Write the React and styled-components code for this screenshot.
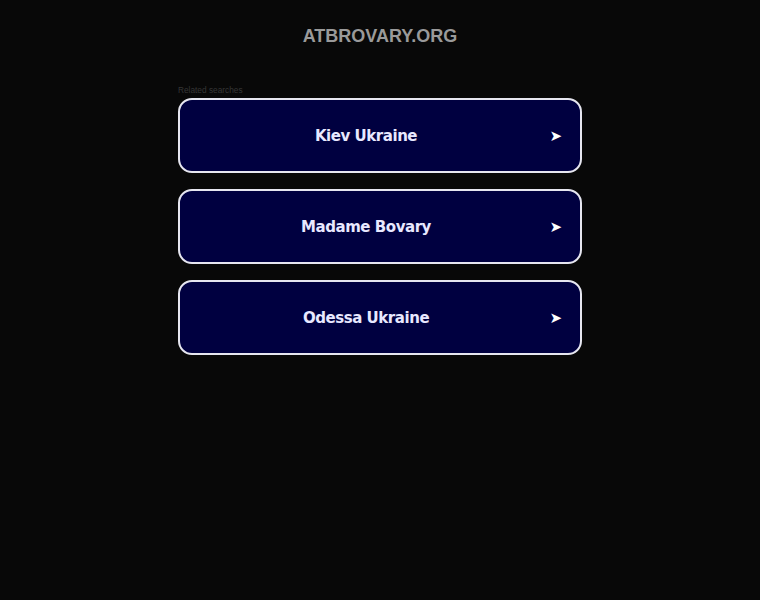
import * as React from "react";
import styled, { createGlobalStyle } from "styled-components";

const Global = createGlobalStyle`
  html, body {
    margin: 0;
    padding: 0;
    background: #080808;
  }
`;

const Page = styled.div`
  min-height: 600px;
  display: flex;
  flex-direction: column;
  align-items: center;
  font-family: "Liberation Sans", Arial, sans-serif;
`;

const Domain = styled.h1`
  margin: 25px 0 0;
  font-size: 18px;
  font-weight: bold;
  line-height: 22px;
  color: #9a9a9a;
`;

const Related = styled.div`
  width: 404px;
  margin-top: 38px;
  display: flex;
  flex-direction: column;
`;

const Caption = styled.div`
  font-size: 8.3px;
  line-height: 10px;
  color: #363636;
  margin-bottom: 3px;
`;

const List = styled.div`
  display: flex;
  flex-direction: column;
  gap: 16px;
`;

const Card = styled.a`
  position: relative;
  display: flex;
  align-items: center;
  justify-content: center;
  height: 71px;
  border: 2px solid #e6e6f0;
  border-radius: 14px;
  background: #000040;
  color: #e8e8ff;
  text-decoration: none;
  font-family: "DejaVu Sans", Verdana, sans-serif;
  font-weight: bold;
  font-size: 15px;
  letter-spacing: -0.45px;
`;

const Label = styled.span`
  margin-left: -28px;
`;

const Arrow = styled.span`
  position: absolute;
  right: 18px;
  top: 50%;
  transform: translateY(-50%);
  font-size: 15px;
  letter-spacing: 0;
  color: #ffffff;
`;

const items = ["Kiev Ukraine", "Madame Bovary", "Odessa Ukraine"];

export default function App() {
  return (
    <Page>
      <Global />
      <Domain>ATBROVARY.ORG</Domain>
      <Related>
        <Caption>Related searches</Caption>
        <List>
          {items.map((t) => (
            <Card key={t} href="#">
              <Label>{t}</Label>
              <Arrow>➤</Arrow>
            </Card>
          ))}
        </List>
      </Related>
    </Page>
  );
}
